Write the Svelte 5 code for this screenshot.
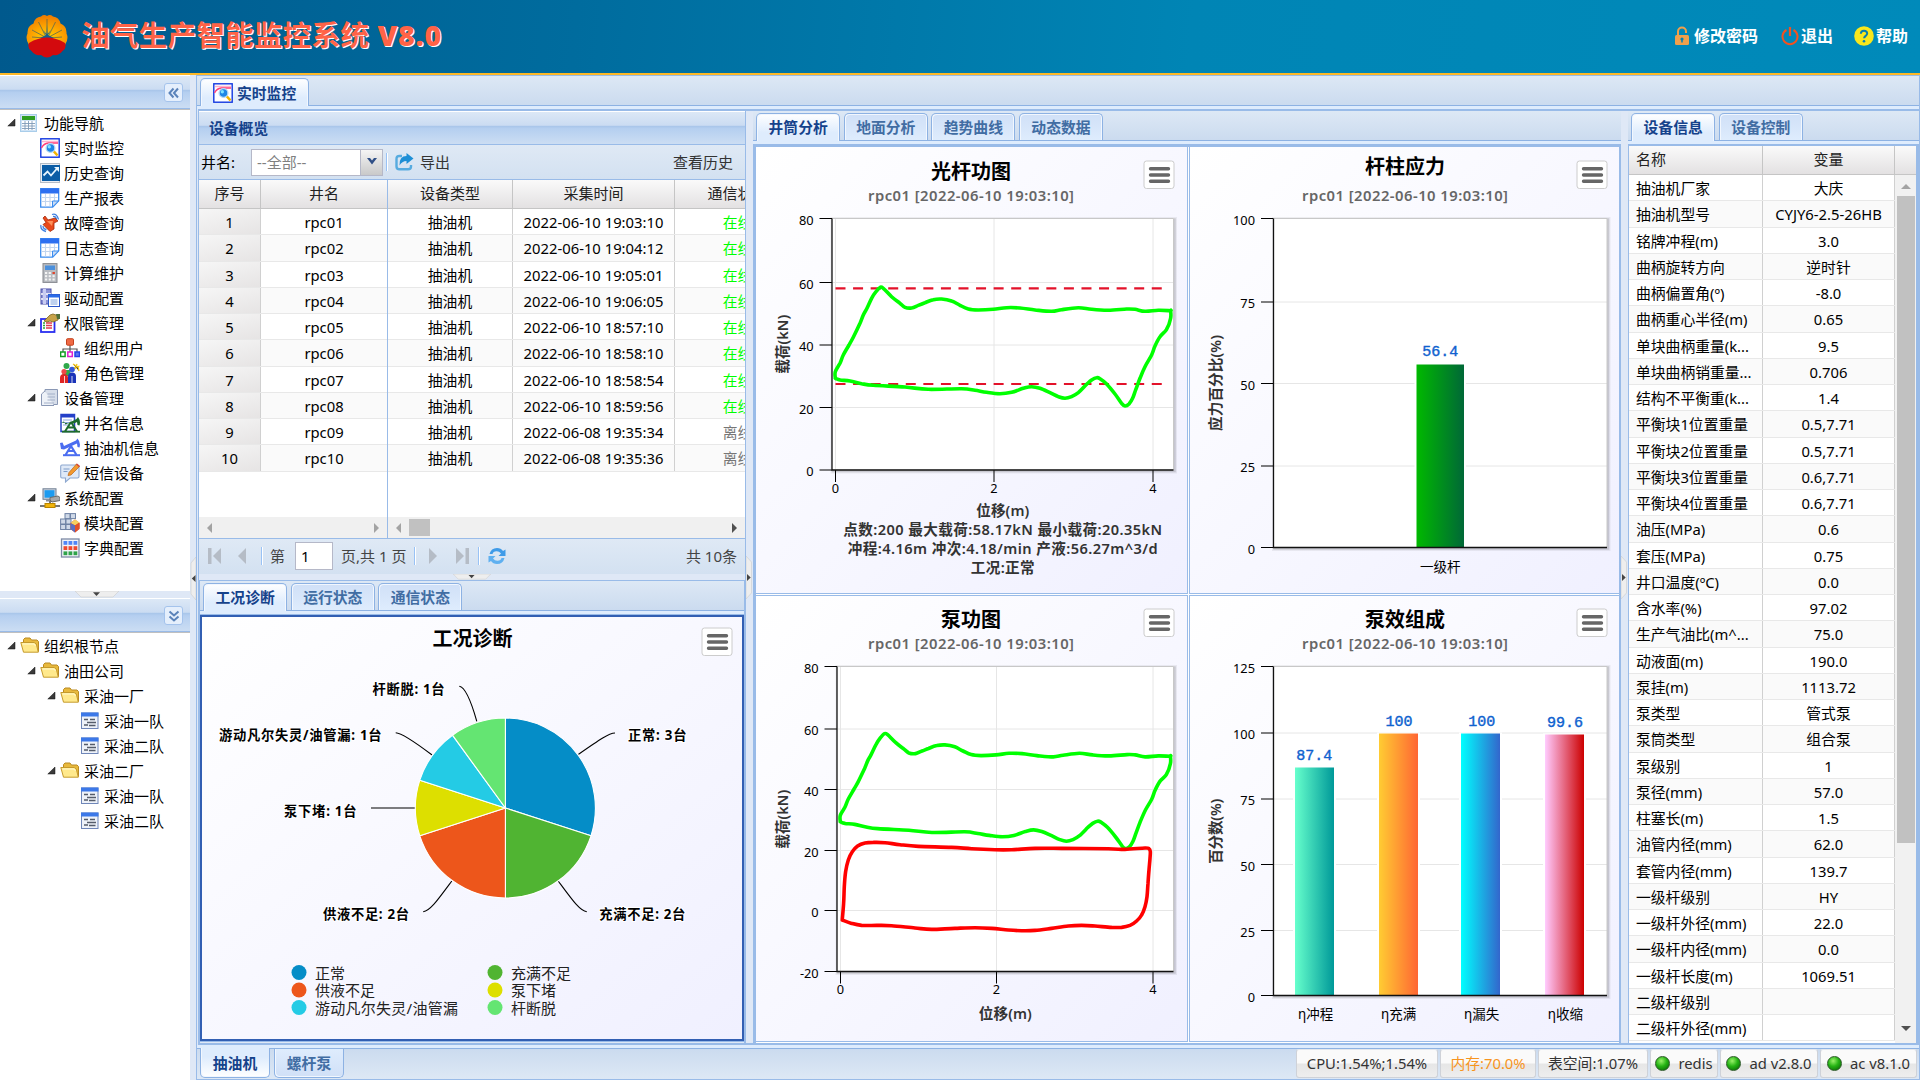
<script>
  const nav = [
    [0, 'sheet', '功能导航', 1],
    [1, 'monitor', '实时监控'],
    [1, 'history', '历史查询'],
    [1, 'report', '生产报表'],
    [1, 'alarm', '故障查询'],
    [1, 'report', '日志查询'],
    [1, 'calc', '计算维护'],
    [1, 'driver', '驱动配置'],
    [1, 'rights', '权限管理', 1],
    [2, 'org', '组织用户'],
    [2, 'role', '角色管理'],
    [1, 'docs', '设备管理', 1],
    [2, 'well', '井名信息'],
    [2, 'pump', '抽油机信息'],
    [2, 'sms', '短信设备'],
    [1, 'system', '系统配置', 1],
    [2, 'module', '模块配置'],
    [2, 'dict', '字典配置']
  ];
  const orgs = [
    [0, 'folder', '组织根节点', 1],
    [1, 'folder', '油田公司', 1],
    [2, 'folder', '采油一厂', 1],
    [3, 'leaf', '采油一队'],
    [3, 'leaf', '采油二队'],
    [2, 'folder', '采油二厂', 1],
    [3, 'leaf', '采油一队'],
    [3, 'leaf', '采油二队']
  ];
  const times = ['10 19:03:10', '10 19:04:12', '10 19:05:01', '10 19:06:05', '10 18:57:10', '10 18:58:10', '10 18:58:54', '10 18:59:56', '08 19:35:34', '08 19:35:36'];
  const wells = times.map((t, i) => ({
    n: i + 1,
    name: 'rpc' + String(i + 1).padStart(2, '0'),
    time: '2022-06-' + t,
    on: i < 8
  }));
  const info = [
    ['抽油机厂家', '大庆'], ['抽油机型号', 'CYJY6-2.5-26HB'], ['铭牌冲程(m)', '3.0'], ['曲柄旋转方向', '逆时针'],
    ['曲柄偏置角(º)', '-8.0'], ['曲柄重心半径(m)', '0.65'], ['单块曲柄重量(k...', '9.5'], ['单块曲柄销重量...', '0.706'],
    ['结构不平衡重(k...', '1.4'], ['平衡块1位置重量', '0.5,7.71'], ['平衡块2位置重量', '0.5,7.71'],
    ['平衡块3位置重量', '0.6,7.71'], ['平衡块4位置重量', '0.6,7.71'], ['油压(MPa)', '0.6'], ['套压(MPa)', '0.75'],
    ['井口温度(ºC)', '0.0'], ['含水率(%)', '97.02'], ['生产气油比(m^...', '75.0'], ['动液面(m)', '190.0'],
    ['泵挂(m)', '1113.72'], ['泵类型', '管式泵'], ['泵筒类型', '组合泵'], ['泵级别', '1'], ['泵径(mm)', '57.0'],
    ['柱塞长(m)', '1.5'], ['油管内径(mm)', '62.0'], ['套管内径(mm)', '139.7'], ['一级杆级别', 'HY'],
    ['一级杆外径(mm)', '22.0'], ['一级杆内径(mm)', '0.0'], ['一级杆长度(m)', '1069.51'], ['二级杆级别', ''], ['二级杆外径(mm)', '']
  ];

  const rodCounts = [[271,835],[271,815],[285,790],[295,765],[312,735],[325,712],[345,670],[355,645],[365,627],[380,595],[393,575],[406,562],[415,565],[440,590],[465,610],[480,622],[500,624],[520,616],[540,608],[565,599],[590,597],[620,603],[645,616],[670,627],[700,630],[745,628],[785,623],[825,624],[870,630],[920,634],[950,629],[1000,623],[1040,628],[1090,631],[1145,627],[1170,628],[1200,634],[1240,631],[1275,632],[1277,632],[1277,655],[1265,688],[1245,710],[1230,738],[1220,765],[1200,800],[1185,835],[1172,870],[1163,895],[1152,912],[1140,918],[1130,910],[1110,882],[1085,852],[1065,836],[1055,833],[1040,840],[1025,853],[1000,878],[980,890],[960,895],[940,890],[915,878],[885,865],[860,860],[835,865],[800,877],[765,881],[725,877],[690,871],[650,866],[550,868],[480,861],[385,856],[350,851],[315,843],[285,840],[273,836],[271,835]];
  const pumpCounts = [[292,988],[296,940],[298,890],[302,845],[310,810],[322,785],[338,768],[360,759],[385,757],[420,758],[465,764],[520,769],[620,772],[680,776],[750,779],[800,779],[870,775],[950,775],[1090,776],[1140,778],[1200,774],[1212,776],[1216,784],[1215,805],[1212,840],[1209,880],[1206,920],[1200,950],[1190,975],[1175,993],[1155,1006],[1130,1012],[1100,1012],[1050,1008],[1010,1006],[970,1008],[920,1015],[870,1021],[830,1022],[790,1020],[740,1015],[690,1013],[630,1015],[560,1018],[510,1014],[440,1007],[400,1006],[350,1006],[320,1000],[292,990]];
  const rod = rodCounts.map(([x, y]) => [(x - 271) / 238.2, (1110 - y) / 9.4375]);
  const pump = pumpCounts.map(([x, y]) => [(x - 286) / 234.5, (962 - y) / 9.15]);

  // Catmull-Rom spline through the mapped points
  function spline(pts, fx, fy) {
    const p = pts.map(([a, b]) => [fx(a), fy(b)]);
    let d = `M${p[0][0].toFixed(1)} ${p[0][1].toFixed(1)}`;
    for (let i = 0; i < p.length - 1; i++) {
      const a = p[i - 1] || p[i], b = p[i], c = p[i + 1], e = p[i + 2] || c;
      d += `C${[b[0] + (c[0] - a[0]) / 6, b[1] + (c[1] - a[1]) / 6, c[0] - (e[0] - b[0]) / 6, c[1] - (e[1] - b[1]) / 6, c[0], c[1]].map((v) => v.toFixed(1)).join(' ')}`;
    }
    return d;
  }
  const X1 = (m) => 835.3 + 79.4 * m, Y1 = (k) => 470 - 3.146 * k;
  const X3 = (m) => 840.3 + 78.17 * m, Y3 = (k) => 910.7 - 3.05 * k;

  const charts = [
    { id: 'rod', box: '756 147 431 446', title: '光杆功图', cx: 971, ty: 171.3, sy: 195.5, bx: 1144, by: 161,
      l: 832, r: 1173.5, t: 218.5, b: 470, lx: 813.7, yt: [[80, 218.5], [60, 282.5], [40, 345], [20, 407.5], [0, 470]],
      xt: [[0, 835.5], [2, 994], [4, 1153]], xl: 488.3, ytitle: ['载荷(kN)', 782.3, 344.3, 59],
      below: [['位移(m)', 1002.7, 510.7, 53], ['点数:200 最大载荷:58.17kN 最小载荷:20.35kN', 1002.7, 529.7, 319], ['冲程:4.16m 冲次:4.18/min 产液:56.27m^3/d', 1002.7, 548.7, 310], ['工况:正常', 1002.7, 567.7, 64]],
      limits: [288.3, 384], lines: [[spline(rod, X1, Y1), '#0f0']] },
    { id: 'stress', box: '1190 147 429 446', title: '杆柱应力', cx: 1405, ty: 166.3, sy: 195.5, bx: 1577, by: 161,
      l: 1273.5, r: 1607, t: 218.5, b: 547.5, lx: 1255, yt: [[100, 218.5], [75, 302], [50, 383.5], [25, 466], [0, 547.5]],
      ytitle: ['应力百分比(%)', 1215.7, 383, 96], yl: 567,
      bars: [[1416.5, 47.5, 364.5, '#00b900', '#006837', '56.4', 1440.3, 351.7, '一级杆', 1440.3]] },
    { id: 'pump', box: '756 596 431 445', title: '泵功图', cx: 971, ty: 619.3, sy: 643.5, bx: 1144, by: 609,
      l: 837, r: 1173.5, t: 666.5, b: 971.5, lx: 818.7, yt: [[80, 666.5], [60, 729], [40, 789.5], [20, 850.5], [0, 910.5], [-20, 971.5]],
      xt: [[0, 840.5], [2, 996.5], [4, 1153]], xl: 990, ytitle: ['载荷(kN)', 782.3, 819.3, 59],
      below: [['位移(m)', 1005.3, 1013.3, 53]],
      lines: [[spline(rod, X3, Y3), '#0f0'], [spline(pump, X3, Y3), '#f00']] },
    { id: 'eff', box: '1190 596 429 445', title: '泵效组成', cx: 1405, ty: 619.3, sy: 643.5, bx: 1577, by: 609,
      l: 1273.5, r: 1607, t: 666.5, b: 995.5, lx: 1255, yt: [[125, 666.5], [100, 733], [75, 799], [50, 864.5], [25, 930.5], [0, 995.5]],
      ytitle: ['百分数(%)', 1215.7, 831.3, 65], yl: 1014.3,
      bars: [
        [1295, 39, 767.5, '#66ffcc', '#009999', '87.4', 1314.3, 755.7, 'η冲程', 1315.7],
        [1379, 39, 733.5, '#ffcc33', '#ff6633', '100', 1399, 721.7, 'η充满', 1398.7],
        [1461, 39, 733.5, '#00ffff', '#3366cc', '100', 1481.7, 721.7, 'η漏失', 1481.7],
        [1545, 39, 734.5, '#ffccff', '#cc0000', '99.6', 1565, 722.7, 'η收缩', 1565.3]
      ] }
  ];

  // Pie geometry
  const PX = 505.4, PY = 808, R = 90;
  const shares = [[3, '#058dc7'], [2, '#50b432'], [2, '#ed561b'], [1, '#dddf00'], [1, '#24cbe5'], [1, '#64e572']];
  let acc = 0;
  const slices = shares.map(([v, fill]) => {
    const a = (acc / 10) * 2 * Math.PI;
    acc += v;
    const b = (acc / 10) * 2 * Math.PI;
    return { fill, d: `M${PX} ${PY}L${PX + R * Math.sin(a)} ${PY - R * Math.cos(a)}A${R} ${R} 0 0 1 ${PX + R * Math.sin(b)} ${PY - R * Math.cos(b)}Z` };
  });
  const pieLabels = [
    ['杆断脱: 1台', 372.5, 689.3, 72], ['游动凡尔失灵/油管漏: 1台', 219, 735.3, 162.5], ['泵下堵: 1台', 284, 811.3, 72.5],
    ['供液不足: 2台', 323, 914.3, 86], ['正常: 3台', 628, 735.3, 58.5], ['充满不足: 2台', 599.3, 914.3, 86]
  ];
  const connectors = [
    'M459.3 686.3C465 687 471 701 476.8 721.3', 'M395.7 732.7C401 733 411 739 432.1 755', 'M371 808H415',
    'M423.2 911.7C430 911 437 901 451.8 881', 'M615 733C609 733 599 740 578.2 754.5', 'M586.8 911.7C580 911 573 901 558.2 881'
  ];
  const legend = [
    ['正常', '#058dc7', 299, 972.5], ['供液不足', '#ed561b', 299, 990], ['游动凡尔失灵/油管漏', '#24cbe5', 299, 1007.5],
    ['充满不足', '#50b432', 495, 972.5], ['泵下堵', '#dddf00', 495, 990], ['杆断脱', '#64e572', 495, 1007.5]
  ];
</script>

{#snippet icon(k)}
  <svg class="ico" viewBox="0 0 20 20" width="20" height="20">
    {#if k === 'sheet'}
      <rect x=".5" y="1.5" width="16" height="17" fill="#cfe3f5" stroke="#a9cdea" /><rect x="2" y="3" width="13" height="4" fill="#2f9e22" />
      <rect x="2" y="8" width="13" height="9" fill="#fff" /><path d="M2 10.5h13M2 13h13M2 15.5h13M5 8v9M8.5 8v9M12 8v9" stroke="#7f9bb8" stroke-width=".9" />
    {:else if k === 'monitor'}
      <rect x=".8" y=".8" width="18.4" height="18.4" fill="#fff" stroke="#1238e0" stroke-width="1.4" />
      <path d="M2 3.500h16" stroke="#ffb3cf" stroke-width="1.500" /><path d="M1.500 10q2-4.500 7-5l9.500 0" stroke="#ff3d78" stroke-width="1.300" fill="none" />
      <path d="M13.500 13l4 4.500" stroke="#f4b400" stroke-width="2.600" /><circle cx="10.500" cy="10" r="4.400" fill="#1e86e6" stroke="#b5d8f5" stroke-width="1.300" /><circle cx="9.300" cy="8.800" r="1.700" fill="#7fe3ff" />
    {:else if k === 'history'}
      <rect x=".5" y=".5" width="19" height="19" fill="#e8eef5" stroke="#b4bcc6" /><rect x="2" y="2" width="18" height="16" fill="#0b5da6" />
      <path d="M3.500 12.500l4-4 3.500 4 6.500-7.500" stroke="#e8f6ff" stroke-width="1.800" fill="none" /><path d="M14 4h5v5z" fill="#e8f6ff" />
    {:else if k === 'report'}
      <path d="M.7.700h18v12l-6 6.500h-12z" fill="#fff" stroke="#3b8df0" stroke-width="1.300" /><rect x=".5" y=".5" width="18.500" height="5" fill="#2c6ff0" />
      <path d="M1.500 9.500h16M1.500 13.500h12M5.500 6v12.500M10 6v12.500M14.500 6v7" stroke="#c3d6ee" stroke-width="1.100" /><path d="M12.500 19v-6h6z" fill="#c9dcf5" stroke="#3b8df0" />
    {:else if k === 'alarm'}
      <path d="M12 1.500q5-1.500 6.500 5M13 3.500q3-.5 3.500 3M1 12q-1 5 5 6.500M3 13q0 3 3.500 3.500" stroke="#3d7fe0" stroke-width="1.300" fill="none" />
      <path d="M3 5l2-2 3 4 7-2 3 3-4 2 0 6-4 2.500-7-7 3-2z" fill="#e8491b" stroke="#a52a0a" stroke-width=".8" /><path d="M7 8l6 0-1 5z" fill="#ff9058" />
    {:else if k === 'calc'}
      <rect x="3" y=".6" width="14" height="18.800" fill="#b9bcc1" stroke="#85888e" /><rect x="5" y="2.500" width="10" height="4.500" fill="#4a8fdc" />
      <g fill="#f4f4f4"><rect x="5" y="9" width="2.200" height="2" /><rect x="8.700" y="9" width="2.200" height="2" /><rect x="5" y="12.200" width="2.200" height="2" /><rect x="8.700" y="12.200" width="2.200" height="2" /><rect x="12.500" y="12.200" width="2.200" height="2" /><rect x="5" y="15.500" width="2.200" height="2" /><rect x="8.700" y="15.500" width="2.200" height="2" /><rect x="12.500" y="15.500" width="2.200" height="2" /></g><rect x="12.500" y="9" width="2.400" height="2" fill="#e0442c" />
    {:else if k === 'driver'}
      <rect x="1" y="1" width="10" height="15" fill="#8d93d6" stroke="#4a4fa8" /><path d="M1 6h10M1 11h10" stroke="#fff" stroke-width="1.600" /><rect x="3" y="1" width="3" height="15" fill="#c9ccf2" />
      <rect x="8.500" y="6.500" width="11" height="12" fill="#fff" stroke="#2b57c8" /><rect x="8.500" y="6.500" width="11" height="3" fill="#2b6be8" /><path d="M10.500 12h7M10.500 14h7M10.500 16h7" stroke="#7fa3dd" />
    {:else if k === 'rights'}
      <rect x="1" y="6" width="13.500" height="13" fill="#fff" stroke="#2a2ff0" stroke-width="1.800" /><path d="M6 10h6M6 12.500h6M6 15h6" stroke="#e23b50" stroke-width="1.300" /><path d="M3 10h2M3 12.500h2M3 15h2" stroke="#2da53a" stroke-width="1.300" />
      <path d="M4 8l6-6 3-1 6 2-1 4-5 2-3-1-3 1z" fill="#c7a24a" stroke="#7f6420" stroke-width=".8" /><path d="M16 1h4v5h-3z" fill="#4f6f3a" />
    {:else if k === 'org'}
      <path d="M10 6v5M3 15v-4h14v4M10 11v4" stroke="#555" stroke-width="1.200" fill="none" /><rect x="6.500" y=".7" width="7" height="6.500" rx="1" fill="#ef6a45" stroke="#c4431f" />
      <rect x=".6" y="14" width="4.500" height="4.500" fill="#fff" stroke="#119c22" stroke-width="1.500" /><rect x="7.800" y="14" width="4.500" height="4.500" fill="#fff" stroke="#e020d0" stroke-width="1.500" /><rect x="15" y="14" width="4.500" height="4.500" fill="#5b78f0" stroke="#2342e8" stroke-width="1.500" />
    {:else if k === 'role'}
      <path d="M13 1l5 3 1 4M17 1l-2 5M19.500 3l-6 2" stroke="#f5c518" stroke-width="1.300" /><circle cx="6.500" cy="3" r="3" fill="#2fa84a" /><path d="M2.500 7h8v6h-8z" fill="#2fa84a" />
      <circle cx="4" cy="8.500" r="2.600" fill="#f04848" /><path d="M0 20v-5q0-4 4-4t4 4v5z" fill="#e02424" /><circle cx="12" cy="6.500" r="2.800" fill="#3358d8" /><path d="M8 20v-6q0-4.500 4-4.500t4 4v6.500z" fill="#1b34b8" /><path d="M4.500 13v7M12 13v7" stroke="#fff" stroke-width=".8" />
    {:else if k === 'docs'}
      <path d="M5 1.500h12.500v15H5z" fill="#d7deea" stroke="#8a98b5" /><path d="M5 3L1.500 6v11.500H14" fill="#eef2f8" stroke="#8a98b5" /><path d="M7.500 6h7.500M7.500 9h7.500M7.500 12h7.500M4 15h10" stroke="#a3b0c8" stroke-width="1.200" />
    {:else if k === 'well'}
      <rect x="1" y="1.500" width="13.500" height="17" fill="#fff" stroke="#2540c8" stroke-width="1.500" /><rect x="1" y="1" width="14" height="3.500" fill="#2540c8" /><path d="M3 7h9M3 9.500h6M3 12h5" stroke="#8fa6e0" />
      <path d="M1 9.500l3-1 1.500 3 11-5.500 1.500-2q3 4 1.500 8.500l-2-.5-.5-3-3 1.500" fill="#1d6b2c" /><path d="M11 9l-6 9.500M11 9l6 9.500M7.500 14.500h7" stroke="#1d6b2c" stroke-width="2" fill="none" /><path d="M2 18.700h18" stroke="#1d6b2c" stroke-width="1.800" />
    {:else if k === 'pump'}
      <path d="M0 5l2.500-.5L4 8l12-5.500L17.500.500q3.500 4 2 9l-2-.5-.5-3.500-13 6L1 11z" fill="#4b6df0" /><path d="M11 8L5.500 17M11 8l5.500 9M8 13h6" stroke="#4b6df0" stroke-width="2.200" fill="none" /><path d="M3 17.200h17" stroke="#4b6df0" stroke-width="2" />
    {:else if k === 'sms'}
      <path d="M2 2h15.500a1.500 1.500 0 011.500 1.500v10a1.500 1.500 0 01-1.500 1.500H10l-4.500 4v-4H2A1.500 1.500 0 01.700 13.500v-10A1.500 1.500 0 012 2z" fill="#dfe9f7" stroke="#8da8d0" stroke-width="1.100" />
      <path d="M3.500 6h6M3.500 8.500h4" stroke="#7e9cc8" stroke-width="1.200" /><path d="M9 9.500L16.500 1l3 2.500L11 12l-3 .5z" fill="#f2992e" stroke="#b9661a" stroke-width=".7" /><path d="M16.500 1l3 2.500" stroke="#d9463a" stroke-width="1.500" />
    {:else if k === 'system'}
      <rect x="3" y=".8" width="13" height="10.500" fill="#cbd3de" stroke="#6f7d92" /><rect x="4.500" y="2.200" width="10" height="7.500" fill="#1c9bf0" /><path d="M6 11.500h6v2H6z" fill="#8a8f98" />
      <path d="M10 9.500l8-1.500 2 1.500v3l-8 1.500-2-2z" fill="#a9a9a9" stroke="#6b6b6b" /><path d="M10 13v3" stroke="#777" stroke-width="2" /><path d="M0 18h20" stroke="#777" stroke-width="2" /><rect x="5" y="15.500" width="10" height="4" fill="#f2b50c" stroke="#b98500" />
    {:else if k === 'module'}
      <g fill="#cfd9e8" stroke="#6f83a5"><rect x="5" y=".6" width="5" height="5" /><rect x="10.500" y=".6" width="5" height="5" /><rect x=".6" y="6" width="5" height="5" /><rect x="6" y="6" width="5" height="5" /><rect x=".6" y="11.500" width="5" height="5" /><rect x="6" y="11.500" width="5" height="5" /></g>
      <path d="M10.500 10l4.500-3.500 4.500 3.500v6L15 19.500 10.500 16z" fill="#d63a20" /><path d="M10.500 10l4.500-3.500 4.500 3-4.500 3z" fill="#f5d060" /><path d="M10.500 10l4.500 2.500v7l-4.500-3.500z" fill="#5a6fc0" /><path d="M15 12.500v7l4.500-4v-6z" fill="#e0502a" />
    {:else if k === 'dict'}
      <rect x="1.500" y="1" width="17.500" height="18" fill="#f2f4f8" stroke="#7d8aa5" stroke-width="1.300" />
      {#each [['#4f86f7', 3], ['#ee4a2f', 8.200], ['#2fa34a', 13.400]] as [c, y]}{#each [3.500, 8.500, 13.500] as x}<rect {x} {y} width="3.800" height="3.800" fill={c} />{/each}{/each}
    {:else if k === 'folder'}
      <path d="M3.500 15V3.500L5 2h5l1.500 2H17l1.500 1.500v10z" fill="#e8b93c" stroke="#b98a22" /><path d="M.8 6.500h13.500l2 1.500 2 8.200H3.500z" fill="#ffe98c" stroke="#c59a2d" /><path d="M2.500 8h11.500l1.500 2" stroke="#fff8d0" fill="none" />
    {:else if k === 'leaf'}
      <rect x="1.500" y="2" width="16.500" height="15.500" fill="#eef2f9" stroke="#6f86b8" /><rect x="1" y="1.500" width="17.500" height="4" fill="#3c78e8" />
      <path d="M4 8.500h4M7 11.500h9M4 14h4M10 8.500h5M9 14.500h6.500" stroke="#555c6a" stroke-width="1.300" />
    {/if}
  </svg>
{/snippet}

{#snippet tree(items)}
  {#each items as [lv, ic, label, open]}
    <div class="node l{lv}">
      <svg class="arr" viewBox="0 0 9 9" width="9" height="9">{#if open}<path d="M8 1v7H.800z" fill="#3a3a3a" stroke="#111" stroke-width=".5" />{/if}</svg>
      {@render icon(ic)}<span>{label}</span>
    </div>
  {/each}
{/snippet}

{#snippet menuButton(x, y)}
  <rect {x} {y} width="30" height="27.500" rx="2.500" fill="#fff" stroke="#ccc" />
  <path d="M{x + 6.500} {y + 7.700}h18M{x + 6.500} {y + 14}h18M{x + 6.500} {y + 20.200}h18" stroke="#666" stroke-width="3.400" stroke-linecap="round" />
{/snippet}

{#snippet tabs(names)}
  <div class="strip">{#each names as n, i}<div class="tab" class:on={i === 0}>{n}</div>{/each}</div>
  <div class="shelf"></div>
{/snippet}

<div class="app">
  <header>
    <svg class="logo" viewBox="0 0 42 43" width="42" height="43">
      <defs><radialGradient id="sun" cx=".5" cy=".75" r=".75"><stop offset="0" stop-color="#ffd400" /><stop offset=".5" stop-color="#fda400" /><stop offset="1" stop-color="#ee7a00" /></radialGradient></defs>
      <path d="M21 24L3 30Q-1 24 1.500 18.500 1 11 7.500 8.500 9 2 15 1.500 18-1 21 1 24-1 27 1.500 33 2 34.500 8.500 41 11 40.500 18.500 43 24 39 30z" fill="url(#sun)" />
      <path d="M21 22V4M20 22L12.500 7M22 22L29.500 7M19 22L6 15M23 22L36 15M18 23L6 22M24 23L36 22" stroke="#5a6a50" stroke-width=".8" />
      <path d="M14 23l6-3-3-5 3.500 4 .5-9 .5 9 3.500-4-3 5 6 3z" fill="#12608f" />
      <path d="M3 28Q12 22.500 21 22.500T39 28Q41 33 36.500 36 33 41 27 40 21 45 15 40 9 41 5.500 36 1 33 3 28z" fill="#d30a0e" />
    </svg>
    <h1>油气生产智能监控系统 <b>V8.0</b></h1>
    <div class="links">
      <span class="lk pwd"><svg viewBox="0 0 16 20" width="16" height="20"><path d="M4 10V5.500a4 4 0 018 0V7" stroke="#f0a04b" stroke-width="2" fill="none" /><rect x="1" y="9" width="14" height="10" rx="1.500" fill="#f0a04b" /><circle cx="8" cy="13" r="1.600" fill="#0083b4" /><path d="M8 13v3.500" stroke="#0083b4" stroke-width="1.500" /></svg>修改密码</span>
      <span class="lk quit"><svg viewBox="0 0 18 20" width="18" height="20"><path d="M5.500 4a7.500 7.500 0 107 0" stroke="#f4511e" stroke-width="2" fill="none" /><path d="M9 1v9" stroke="#f4511e" stroke-width="2.200" /></svg>退出</span>
      <span class="lk help"><svg viewBox="0 0 20 20" width="20" height="20"><circle cx="10" cy="10" r="9.800" fill="#f8e71c" /><path d="M6.800 7.800q.2-3 3.200-3t3.200 2.700c0 2.300-3.100 2.500-3.100 4.800" stroke="#0a7fae" stroke-width="2" fill="none" /><circle cx="10" cy="15.200" r="1.300" fill="#0a7fae" /></svg>帮助</span>
    </div>
  </header>

  <div class="body">
    <aside>
      <div class="bar"><span class="tool"><svg viewBox="0 0 18 18" width="18" height="18"><path d="M8.500 4.500L4.500 9l4 4.500M13 4.500L9 9l4 4.500" stroke="#5a83ba" stroke-width="2" fill="none" /></svg></span></div>
      <div class="tree t1">{@render tree(nav)}</div>
      <div class="hsplit"><svg viewBox="0 0 44 7" width="44" height="7"><path d="M0 0h44l-6 6H6z" fill="#eee" stroke="#ccc" stroke-width=".6" /><path d="M18 1.200h7L21.500 5z" fill="#444" /></svg></div>
      <div class="bar"><span class="tool"><svg viewBox="0 0 18 18" width="18" height="18"><path d="M4.500 4.500L9 8.500l4.500-4M4.500 9.500l4.500 4 4.500-4" stroke="#5a83ba" stroke-width="2" fill="none" /></svg></span></div>
      <div class="tree t2">{@render tree(orgs)}</div>
    </aside>
    <div class="vsplit w6"><svg viewBox="0 0 6 43" width="6" height="43"><path d="M6 0L1 6v31l5 6z" fill="#eee" stroke="#ccc" stroke-width=".6" /><path d="M5.500 18v7L1.800 21.500z" fill="#444" /></svg></div>

    <main>
      <div class="strip top"><div class="tab on main-tab">{@render icon('monitor')}实时监控</div></div>
      <div class="shelf"></div>
      <div class="content">
        <section class="left">
          <div class="bar title">设备概览</div>
          <div class="toolbar">
            <span class="lab">井名:</span>
            <div class="combo"><span>--全部--</span><i><svg viewBox="0 0 12 8" width="12" height="8"><path d="M1 0h3L6 2.500 8 0h3L6 6.500z" fill="#2f4f86" /></svg></i></div>
            <span class="sep"></span>
            <svg class="exp" viewBox="0 0 19 18" width="19" height="18"><path d="M7 3H4.500Q1.500 3 1.500 6v7.500q0 2.800 3 2.800h8.500q3 0 3-2.800V12" stroke="#56abdf" stroke-width="2.400" fill="none" /><path d="M11.500 0L18.500 5.500l-7 5.500V8Q7 8 4.500 12.500 4 3 11.500 3z" fill="#1e8fd6" /></svg>
            <span class="export">导出</span>
            <span class="hist">查看历史</span>
          </div>
          <div class="grid">
            <div class="locked">
              <div class="gh"><span class="c1">序号</span><span class="c2">井名</span></div>
              {#each wells as w}<div class="gr"><span class="c1 num">{w.n}</span><span class="c2">{w.name}</span></div>{/each}
              <div class="fill"></div>
              <div class="hscroll"><b class="la"></b><b class="ra"></b></div>
            </div>
            <div class="free">
              <div class="gh"><span class="c3">设备类型</span><span class="c4">采集时间</span><span class="c5">通信状态</span></div>
              {#each wells as w}<div class="gr"><span class="c3">抽油机</span><span class="c4">{w.time}</span><span class="c5" class:green={w.on} class:grey={!w.on}>{w.on ? '在线' : '离线'}</span></div>{/each}
              <div class="fill"></div>
              <div class="hscroll"><b class="la"></b><em></em><b class="ra dark"></b></div>
            </div>
          </div>
          <div class="paging">
            <svg viewBox="0 0 62 30" width="62" height="30"><g fill="#b5bcc6"><path d="M8 7h3.500v16H8zM21 7v16l-8-8z" /><path d="M46 7v16l-8-8z" /></g></svg>
            <span class="sep first"></span><span class="p1">第</span><span class="pin">1</span><span class="p2">页,共 1 页</span><span class="sep"></span>
            <svg viewBox="0 0 60 30" width="60" height="30"><g fill="#b5bcc6"><path d="M12 7v16l8-8zM39 7v16l8-8zM48.500 7H52v16h-3.500z" /></g></svg>
            <span class="sep last"></span>
            <svg class="ref" viewBox="0 0 20 20" width="20" height="20"><path d="M2.500 8Q4 2 10 2q4 0 6 3l2.500-1.500V10h-7L14 7.500Q12 5 9.500 5.200 6 5.500 5.500 8z" fill="#3f9be8" /><path d="M17.500 12Q16 18 10 18q-4 0-6-3l-2.500 1.500V10h7L6 12.500q2 2.500 4.500 2.300Q14 14.500 14.500 12z" fill="#5fb0f0" /></svg>
            <span class="total">共 10条</span>
          </div>
          <div class="hsplit inner"><svg viewBox="0 0 44 7" width="44" height="6"><path d="M0 0h44l-6 6H6z" fill="#eee" stroke="#ccc" stroke-width=".6" /><path d="M18 1.200h7L21.500 5z" fill="#444" /></svg></div>
          <div class="sub">
            {@render tabs(['工况诊断', '运行状态', '通信状态'])}
            <div class="pie">
              <svg viewBox="202 617 540 422" width="540" height="422">
                <defs><linearGradient id="bg" x1="0" y1="0" x2="1" y2="1"><stop offset="0" stop-color="#fff" /><stop offset="1" stop-color="#f0f0ff" /></linearGradient></defs>
                <rect x="202" y="617" width="540" height="422" fill="url(#bg)" />
                <text x="472.500" y="645.500" class="ttl">工况诊断</text>
                {@render menuButton(702, 628)}
                {#each connectors as d}<path {d} stroke="#000" fill="none" stroke-width="1.100" />{/each}
                {#each slices as s}<path d={s.d} fill={s.fill} stroke="#fff" stroke-width="1.100" stroke-linejoin="round" />{/each}
                {#each pieLabels as [t, x, y, w]}<text {x} y={y + 4.800} textLength={w} class="pl">{t}</text>{/each}
                {#each legend as [t, c, x, y], i}<circle cx={x} cy={y} r="7.500" fill={c} /><text x={x + 16} y={y + 6} textLength={i === 2 ? 143 : undefined} class="lg">{t}</text>{/each}
              </svg>
            </div>
          </div>
        </section>

        <div class="vsplit w7"><svg viewBox="0 0 7 43" width="7" height="43"><path d="M0 0l5.500 6v31L0 43z" fill="#eee" stroke="#ccc" stroke-width=".6" /><path d="M1 18v7l3.700-3.500z" fill="#444" /></svg></div>

        <section class="center">
          {@render tabs(['井筒分析', '地面分析', '趋势曲线', '动态数据'])}
          <div class="charts">
            {#each charts as c}
              <div class="cell {c.id}">
                <svg viewBox={c.box}>
                  <defs>
                    <linearGradient id="bg{c.id}" x1="0" y1="0" x2="1" y2="1"><stop offset="0" stop-color="#fff" /><stop offset="1" stop-color="#f0f0ff" /></linearGradient>
                    {#each c.bars || [] as b, i}<linearGradient id="g{c.id}{i}"><stop offset="0" stop-color={b[3]} /><stop offset="1" stop-color={b[4]} /></linearGradient>{/each}
                  </defs>
                  <rect x={c.box.split(' ')[0]} y={c.box.split(' ')[1]} width="440" height="450" fill="url(#bg{c.id})" />
                  <text x={c.cx} y={c.ty + 7.300} class="ttl">{c.title}</text>
                  <text x={c.cx - 103} y={c.sy + 5} class="st" textLength="206">rpc01 [2022-06-10 19:03:10]</text>
                  {@render menuButton(c.bx, c.by)}
                  <rect x={c.l + 1} y={c.t + 1} width={c.r - c.l} height={c.b - c.t} fill="none" stroke="#000" stroke-opacity=".06" stroke-width="5" />
                  <rect x={c.l + 1} y={c.t + 1} width={c.r - c.l} height={c.b - c.t} fill="none" stroke="#000" stroke-opacity=".13" stroke-width="2.500" />
                  <rect x={c.l} y={c.t} width={c.r - c.l} height={c.b - c.t} fill="#fff" />
                  {#each c.yt as [v, y]}
                    <path d="M{c.l} {y}H{c.r}" stroke="#e6e6e6" />
                    <path d="M{c.l - 12.500} {y}H{c.l}" stroke="#000" />
                    <text x={c.lx} y={y + 6} class="al end">{v}</text>
                  {/each}
                  {#each c.xt || [] as [v, x]}
                    <path d="M{x} {c.t}V{c.b}" stroke="#e6e6e6" />
                    <path d="M{x} {c.b}v12" stroke="#000" />
                    <text {x} y={c.xl + 4.300} class="al mid">{v}</text>
                  {/each}
                  <path d="M{c.l} {c.t}H{c.r}V{c.b}" stroke="#c8c8c8" fill="none" />
                  {#each c.bars || [] as b, i}
                    <rect x={b[0] - 2} y={b[2] - 1} width={b[1] + 4} height={c.b - b[2] + 1} fill="#fff" />
                    <rect x={b[0]} y={b[2]} width={b[1]} height={c.b - b[2]} fill="url(#g{c.id}{i})" />
                    <text x={b[6]} y={b[7] + 4.500} class="bv">{b[5]}</text>
                    <text x={b[9]} y={c.yl + 5} class="bx">{b[8]}</text>
                  {/each}
                  <path d="M{c.l} {c.t}V{c.b}H{c.r}" stroke="#111" stroke-width="1.300" fill="none" />
                  {#each c.limits || [] as y}<path d="M835.500 {y}H1162" stroke="#e3122a" stroke-width="2.200" stroke-dasharray="10 7.570" />{/each}
                  {#each c.lines || [] as [d, s]}<path {d} fill="none" stroke={s} stroke-width="3.600" stroke-linejoin="round" stroke-linecap="round" />{/each}
                  <text transform="translate({c.ytitle[1] + 5.200} {c.ytitle[2] + c.ytitle[3] / 2}) rotate(-90)" textLength={c.ytitle[3]} class="at">{c.ytitle[0]}</text>
                  {#each c.below || [] as [t, x, y, w]}<text x={x - w / 2} y={y + 5.300} textLength={w} class="at">{t}</text>{/each}
                </svg>
              </div>
            {/each}
          </div>
        </section>

        <div class="vsplit w7"><svg viewBox="0 0 7 43" width="7" height="43"><path d="M0 0l5.500 6v31L0 43z" fill="#eee" stroke="#ccc" stroke-width=".6" /><path d="M1 18v7l3.700-3.500z" fill="#444" /></svg></div>

        <section class="right">
          {@render tabs(['设备信息', '设备控制'])}
          <div class="props">
            <div class="gh"><span class="n">名称</span><span class="v">变量</span></div>
            <div class="pb">
              <div class="rows">{#each info as [n, v]}<div class="gr"><span class="n">{n}</span><span class="v">{v}</span></div>{/each}</div>
              <div class="vscroll"><b class="ua"></b><em></em><i></i><b class="da"></b></div>
            </div>
          </div>
        </section>
      </div>
      <div class="shelf low"></div>
      <footer>
        <div class="btab on">抽油机</div><div class="btab">螺杆泵</div>
        <div class="status">
          <span class="s1">CPU:1.54%;1.54%</span><span class="s2">内存:70.0%</span><span class="s3">表空间:1.07%</span>
          <span class="s4"><i></i>redis</span><span class="s5"><i></i>ad v2.8.0</span><span class="s6"><i></i>ac v8.1.0</span>
        </div>
      </footer>
    </main>
  </div>
</div>

<style>
  :global(body) { overflow: hidden; }
  .app, .app * { box-sizing: border-box; }
  .app { width: 1920px; height: 1080px; display: flex; flex-direction: column; background: #dfe8f6; font: 15px/20px "Noto Sans", "Noto Sans CJK SC", sans-serif; color: #000; white-space: nowrap; overflow: hidden; }
  .app svg { display: block; flex: none; }
  header { height: 75px; border-bottom: 2px solid #fdb827; background: linear-gradient(95deg, #00598d, #006c9e 30%, #0085b5 62%, #008aba); display: flex; align-items: center; padding: 0 12px 0 26px; }
  .logo { margin-top: -1px; }
  h1 { margin: 0 0 3px 13px; font-size: 28.8px; line-height: 40px; font-weight: 700; color: #ff6347; text-shadow: 1px 1px 0 #fff; }
  h1 b { display: inline-block; letter-spacing: .6px; margin-left: 1px; }
  .links { margin-left: auto; display: flex; color: #fff; font-weight: 700; font-size: 16px; margin-bottom: 2px; }
  .lk { display: flex; align-items: center; }
  .pwd svg { margin-right: 4px; } .quit svg { margin-right: 2px; } .help svg { margin-right: 2px; }
  .quit { margin-left: 23px; } .help { margin-left: 21px; }
  .body { flex: 1; display: flex; min-height: 0; }
  aside { width: 190px; display: flex; flex-direction: column; }
  .bar { height: 35px; flex: none; border-bottom: 2px solid #c0c0c0; background: linear-gradient(#fff 0 1px, #dce8f6 1px, #cbdcf2 42%, #a9c6ea 45%, #b5cff0 52%, #cbddf3 96%, #99bbe8 97%); display: flex; align-items: center; justify-content: flex-end; padding-right: 7px; }
  aside > .bar { border-bottom-width: 1px; }
  .tool { width: 19px; height: 19px; border: 1px solid #a4c3ec; border-radius: 3px; background: #e5effc; display: grid; place-items: center; }
  .tree { background: #fff; }
  .t1 { height: 481px; } .t2 { flex: 1; }
  .node { height: 25px; display: flex; align-items: center; }
  .l0 { padding-left: 7px; } .l1 { padding-left: 27px; } .l2 { padding-left: 47px; } .l3 { padding-left: 67px; }
  .arr { margin-right: 4px; }
  .node .ico, .ico { margin-right: 4px; }
  .hsplit { height: 7px; background: #dfe8f6; display: flex; justify-content: center; }
  aside .hsplit { padding-left: 3px; }
  .hsplit.inner { height: 6px; }
  .vsplit { background: #dfe8f6; flex: none; }
  .w6 { width: 6px; padding-top: 482px; } .w7 { width: 7px; padding-top: 445px; }
  main { width: 1724px; border: 1px solid #99bbe8; display: flex; flex-direction: column; }
  .strip { height: 30px; flex: none; background: linear-gradient(#dde8f5, #cbdbef); border-bottom: 1px solid #8db2e3; display: flex; align-items: flex-end; gap: 3.300px; padding-left: 3px; }
  .tab { height: 27px; width: 84.300px; border: 1px solid #8db2e3; border-bottom: 0; border-radius: 5px 5px 0 0; background: linear-gradient(#d0e0f7, #deecfd); box-shadow: inset 1px 1px #f2f7fe, inset -1px 0 #f2f7fe; text-align: center; line-height: 26px; font-weight: 700; font-size: 14.800px; color: #416da3; }
  .tab.on { background: linear-gradient(#fff, #deecfd 70%); color: #15428b; margin-bottom: -1px; height: 28px; }
  .main-tab { width: 109px; display: flex; align-items: center; padding-left: 12px; }
  .shelf { height: 3px; flex: none; background: #deecfd; }
  .content { margin-left: 1px; height: 936px; border: solid #99bbe8; border-width: 2px 0; display: flex; flex: none; }
  .left { width: 548px; border: solid #99bbe8; border-width: 0 1px; display: flex; flex-direction: column; }
  .title { height: 34px; border-bottom: 0; justify-content: flex-start; padding-left: 10px; font-weight: 700; font-size: 14.800px; color: #15428b; }
  .toolbar { height: 35px; flex: none; border-bottom: 1px solid #99bbe8; background: linear-gradient(#dfe9f5, #d3e1f1); display: flex; align-items: center; padding: 0 12px 0 2px; }
  .lab { width: 50px; }
  .combo { width: 132px; height: 27px; border: 1px solid #b5b8c8; background: #fff; display: flex; justify-content: space-between; color: #808080; line-height: 25px; }
  .combo span { padding-left: 5px; }
  .combo i { width: 22px; border-left: 1px solid #b5b8c8; background: linear-gradient(#f5f5f5, #c9c9c9); display: grid; place-items: center; }
  .sep { width: 2px; height: 18px; background: linear-gradient(90deg, #99c2f5 50%, #fff 50%); margin: 0 0 0 3px; flex: none; }
  .exp { margin-left: 7px; } .export { margin-left: 6px; color: #333; } .hist { margin-left: auto; color: #333; }
  .grid { height: 358px; flex: none; display: flex; background: #fff; }
  .locked { width: 189px; border-right: 1px solid #99bbe8; display: flex; flex-direction: column; }
  .free { width: 357px; overflow: hidden; display: flex; flex-direction: column; }
  .gh { height: 29px; flex: none; border-bottom: 1px solid #c5c5c5; background: linear-gradient(#fafafa, #e3e1e2); display: flex; }
  .gh span { border-right: 1px solid #c5c5c5; line-height: 27px; text-align: center; color: #222; flex: none; }
  .gr { height: 26.250px; flex: none; border-bottom: 1px solid #e8e8e8; display: flex; font-size: 14.800px; }
  .gr:nth-child(odd) { background: #fafafa; }
  .rows .gr:nth-child(odd) { background: #fff; } .rows .gr:nth-child(even) { background: #fafafa; }
  .gr span { border-right: 1px solid #d0d0d0; line-height: 26px; text-align: center; flex: none; }
  .c1 { width: 62px; } .c2 { width: 126px; } .locked .c2 { border-right: 0; }
  .num { background: linear-gradient(165deg, #f6f6f6, #e6e4e4); }
  .c3 { width: 125px; } .c4 { width: 162px; } .c5 { width: 126px; }
  .c5.green { color: #0f0; } .c5.grey { color: #777; }
  .fill { flex: 1; }
  .hscroll { height: 21px; background: #f0f0f0; display: flex; align-items: center; padding: 0 8px; }
  .hscroll b, .vscroll b { width: 0; height: 0; border: 5px solid transparent; }
  .hscroll .la { border-right-color: #a3a3a3; border-left: 0; } .hscroll .ra { border-left-color: #a3a3a3; border-right: 0; margin-left: auto; }
  .hscroll .dark { border-left-color: #505050; }
  .hscroll em { width: 21px; height: 17px; background: #c1c1c1; margin-left: 8px; }
  .paging { height: 36px; flex: none; border-top: 1px solid #99bbe8; background: linear-gradient(#dfe9f5, #d3e1f1); display: flex; align-items: center; padding: 0 8px 2px 0; color: #444; }
  .paging > svg { margin-left: 1px; }
  .sep.first { margin-left: -1px; } .sep.last { margin-left: 1px; }
  .p1 { margin-left: 7px; } .pin { width: 38px; height: 28px; border: 1px solid #b5b8c8; background: #fff; color: #000; margin-left: 10px; padding-left: 5px; line-height: 27px; }
  .p2 { margin-left: 8px; margin-right: 5px; } .paging .ref { margin-left: 7px; } .total { margin-left: auto; }
  .sub { flex: 1; border: 1px solid #99bbe8; border-bottom-width: 0; display: flex; flex-direction: column; min-height: 0; }
  .pie { border: 2px solid #325fb3; outline: 1px solid #99bbe8; width: 544px; height: 426px; margin-top: 1px; }
  .center { width: 868px; display: flex; flex-direction: column; }
  .charts { flex: 1; border: solid #99bbe8; border-width: 3px 2px 0 3px; background: #fff; display: grid; grid-template-columns: 432px 430px; grid-template-rows: 447px 447px; gap: 1px; }
  .cell { border: 0 solid #99bbe8; }
  .cell svg { width: 100%; height: 100%; }
  .cell.rod { border-width: 0 1px 1px 0; } .cell.stress { border-width: 0 0 1px 1px; } .cell.pump { border-width: 1px 1px 1px 0; } .cell.eff { border-width: 1px 0 1px 1px; }
  text { font-size: 14.500px; }
  .ttl { font-size: 20px; font-weight: 700; text-anchor: middle; }
  .st { font-size: 14.800px; font-weight: 600; fill: #666; }
  .al { font-size: 12.800px; } .end { text-anchor: end; } .mid { text-anchor: middle; }
  .at { font-size: 14.600px; font-weight: 600; fill: #333; }
  .bv { font: 400 15px "Liberation Mono", monospace; fill: #0f62cf; stroke: #0f62cf; stroke-width: .4px; text-anchor: middle; }
  .bx { font-size: 13.500px; text-anchor: middle; }
  .pl { font-size: 13.300px; font-weight: 700; paint-order: stroke; stroke: #fff; stroke-width: 2px; }
  .lg { font-size: 15px; fill: #222; }
  .right { width: 291px; display: flex; flex-direction: column; }
  .props { flex: 1; border: solid #99bbe8; border-width: 2px 3px 0 1px; background: #fff; min-height: 0; }
  .n { width: 134px; padding-left: 7px; } .gh .n, .gr .n { text-align: left; } .v { width: 132px; }
  .pb { display: flex; height: 868px; }
  .rows { width: 266px; overflow: hidden; }
  .vscroll { flex: 1; background: #f1f1f1; display: flex; flex-direction: column; align-items: center; }
  .vscroll .ua { border-bottom-color: #a3a3a3; border-top: 0; margin: 9px 0 7px; }
  .vscroll em { width: 18px; height: 647px; background: #c1c1c1; }
  .vscroll i { flex: 1; }
  .vscroll .da { border-top-color: #505050; border-bottom: 0; margin-bottom: 12px; }
  footer { flex: 1; border-top: 1px solid #8db2e3; background: linear-gradient(#cbdbef, #dde8f5); display: flex; align-items: flex-start; padding-left: 3px; gap: 4px; }
  .btab { width: 70px; height: 29px; border: 1px solid #8db2e3; border-top: 0; border-radius: 0 0 5px 5px; background: linear-gradient(#deecfd, #d0e0f7); box-shadow: inset 1px -1px #f2f7fe; text-align: center; line-height: 28px; font-weight: 700; font-size: 14.800px; color: #416da3; }
  .btab.on { background: linear-gradient(#deecfd 30%, #fff); color: #15428b; margin-top: -1px; height: 30px; line-height: 30px; }
  .status { margin-left: auto; display: flex; gap: 2px; padding-right: 2px; }
  .status span { height: 29px; border: 1px solid #cfd2d8; border-top-color: #e4e7ec; border-radius: 3px; background: linear-gradient(#fafafa 48%, #e6e6e6 52%, #eee); display: flex; align-items: center; justify-content: center; color: #333; gap: 8px; font-size: 14.800px; padding-bottom: 1px; }
  .status i { width: 15px; height: 15px; border-radius: 50%; background: radial-gradient(circle at 40% 30%, #9af06a, #25b414 45%, #0a6b06 90%); border: 1px solid #2b5a26; }
  .s1 { width: 142px; } .s2 { width: 96px; } .s3 { width: 110px; } .s4 { width: 68px; } .s5 { width: 98px; } .s6 { width: 97px; }
  .status .s2 { color: #f7941d; }
</style>
